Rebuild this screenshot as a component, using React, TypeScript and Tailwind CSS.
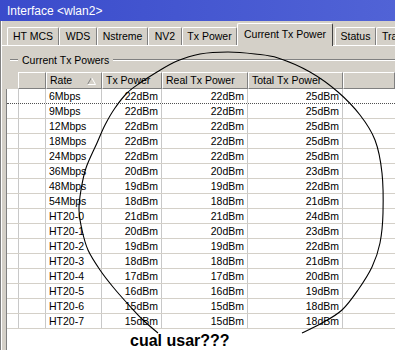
import React from "react";

const rows: [string, number, number, number][] = [
  ["6Mbps", 22, 22, 25],
  ["9Mbps", 22, 22, 25],
  ["12Mbps", 22, 22, 25],
  ["18Mbps", 22, 22, 25],
  ["24Mbps", 22, 22, 25],
  ["36Mbps", 20, 20, 23],
  ["48Mbps", 19, 19, 22],
  ["54Mbps", 18, 18, 21],
  ["HT20-0", 21, 21, 24],
  ["HT20-1", 20, 20, 23],
  ["HT20-2", 19, 19, 22],
  ["HT20-3", 18, 18, 21],
  ["HT20-4", 17, 17, 20],
  ["HT20-5", 16, 16, 19],
  ["HT20-6", 15, 15, 18],
  ["HT20-7", 15, 15, 18],
];

const tabs = [
  { label: "HT MCS", w: "w-[52px]" },
  { label: "WDS", w: "w-[38px]" },
  { label: "Nstreme", w: "w-[51px]" },
  { label: "NV2", w: "w-[34px]" },
  { label: "Tx Power", w: "w-[55px]" },
];

// hand drawn loop around the power columns
const loop = [
  [158, 333], [143, 320], [127, 303], [113, 287], [100, 270], [88, 250], [82, 230],
  [79, 210], [81, 190], [86, 168], [97, 143], [105, 125], [115, 108], [127, 93],
  [140, 83], [157, 72], [177, 61], [200, 54], [228, 52], [255, 54], [278, 58],
  [310, 72], [338, 92], [360, 115], [375, 140], [382, 173], [383, 213], [380, 243],
  [372, 267], [358, 290], [342, 310], [322, 323], [302, 333],
];

function smooth(p: number[][]) {
  let d = `M${p[0][0]} ${p[0][1]}`;
  for (let i = 0; i < p.length - 1; i++) {
    const p0 = p[i - 1] ?? p[i];
    const p1 = p[i];
    const p2 = p[i + 1];
    const p3 = p[i + 2] ?? p2;
    const c1x = p1[0] + (p2[0] - p0[0]) / 6;
    const c1y = p1[1] + (p2[1] - p0[1]) / 6;
    const c2x = p2[0] - (p3[0] - p1[0]) / 6;
    const c2y = p2[1] - (p3[1] - p1[1]) / 6;
    d += ` C${c1x.toFixed(1)} ${c1y.toFixed(1)} ${c2x.toFixed(1)} ${c2y.toFixed(1)} ${p2[0]} ${p2[1]}`;
  }
  return d;
}

const head = "h-[17px] flex items-center px-[3px] border-t border-l border-white border-r border-b border-r-[#808080] border-b-[#808080] whitespace-nowrap";
const cell = "h-full flex items-center border-r border-[#c8c8c8] whitespace-nowrap";

export default function App() {
  return (
    <div className="relative w-[395px] h-[350px] overflow-hidden bg-[#d4d0c8] text-black font-['Liberation_Sans',Arial,sans-serif] text-[10.5px] leading-none flex flex-col">
      {/* Title bar */}
      <div className="h-[21px] shrink-0 bg-gradient-to-r from-[#3a4bcb] to-[#5163d6] text-white text-[12px] flex items-center pl-[7px] pt-px">
        Interface &lt;wlan2&gt;
      </div>

      <div className="flex-1 flex flex-col border-l border-[#808080]">
        <div className="flex-1 flex flex-col border-l border-white">
          {/* Tabs */}
          <div className="h-[24px] shrink-0 flex items-end pl-[5px]">
            {tabs.map((t) => (
              <div
                key={t.label}
                className={`${t.w} h-[18px] shrink-0 flex items-center justify-center border-t border-l border-white border-r border-r-[#808080] rounded-t-[2px] whitespace-nowrap`}
              >
                {t.label}
              </div>
            ))}
            <div className="w-[96px] h-[23px] shrink-0 -mb-px relative z-10 bg-[#d4d0c8] flex items-center justify-center border-t border-l border-white border-r border-r-[#404040] rounded-t-[2px] whitespace-nowrap pb-[2px]">
              Current Tx Power
            </div>
            <div className="w-[41px] h-[18px] shrink-0 ml-[2px] flex items-center justify-center border-t border-l border-white border-r border-r-[#808080] rounded-t-[2px]">
              Status
            </div>
            <div className="w-[40px] h-[18px] shrink-0 flex items-center pl-[5px] border-t border-l border-white rounded-t-[2px] overflow-hidden">
              Traffic
            </div>
          </div>

          {/* Panel */}
          <div className="flex-1 flex flex-col border-t border-white pt-[7px]">
            <div className="h-[14px] flex items-center">
              <div className="ml-[8px] w-[8px] border-t border-[#808080] border-b border-b-white" />
              <span className="px-[4px]">Current Tx Powers</span>
              <div className="flex-1 border-t border-[#808080] border-b border-b-white" />
            </div>

            <div className="mt-[5px] flex-1 flex flex-col ml-[4px]">
              {/* Header */}
              <div className="flex pl-[12px]">
                <div className={`${head} w-[28px]`} />
                <div className={`${head} w-[56px] justify-between`}>
                  <span>Rate</span>
                  <svg width="9" height="8" viewBox="0 0 9 8" className="mr-[2px]">
                    <path d="M0.5 7.5 L4.5 0.5" stroke="#808080" fill="none" />
                    <path d="M4.5 0.5 L8.5 7.5 L0.5 7.5" stroke="#ffffff" fill="none" />
                  </svg>
                </div>
                <div className={`${head} w-[60px]`}>Tx Power</div>
                <div className={`${head} w-[86px]`}>Real Tx Power</div>
                <div className={`${head} w-[95px]`}>Total Tx Power</div>
                <div className={`${head} flex-1`} />
              </div>

              {/* Rows */}
              <div className="flex-1 bg-white border-l border-[#808080] flex flex-col">
                {rows.map(([rate, tx, real, total], i) => (
                  <div
                    key={rate}
                    className={`h-[15px] flex pl-[11px] border-b ${i === 0 ? "border-dotted border-[#505050]" : "border-[#d4d0c8]"}`}
                  >
                    <div className={`${cell} w-[28px] border-l`} />
                    <div className={`${cell} w-[56px] pl-[3px]`}>{rate}</div>
                    <div className={`${cell} w-[60px] justify-end pr-[3px]`}>{tx}dBm</div>
                    <div className={`${cell} w-[86px] justify-end pr-[3px]`}>{real}dBm</div>
                    <div className={`${cell} w-[95px] justify-end pr-[3px]`}>{total}dBm</div>
                    <div className="flex-1" />
                  </div>
                ))}
                <div className="pl-[123px] pt-[4px] text-[16px] font-bold">cual usar???</div>
              </div>
            </div>
          </div>
        </div>
      </div>

      <svg className="absolute inset-0 pointer-events-none" width="395" height="350" viewBox="0 0 395 350">
        <path d={smooth(loop)} stroke="#000" strokeWidth="1.1" fill="none" />
      </svg>
    </div>
  );
}
